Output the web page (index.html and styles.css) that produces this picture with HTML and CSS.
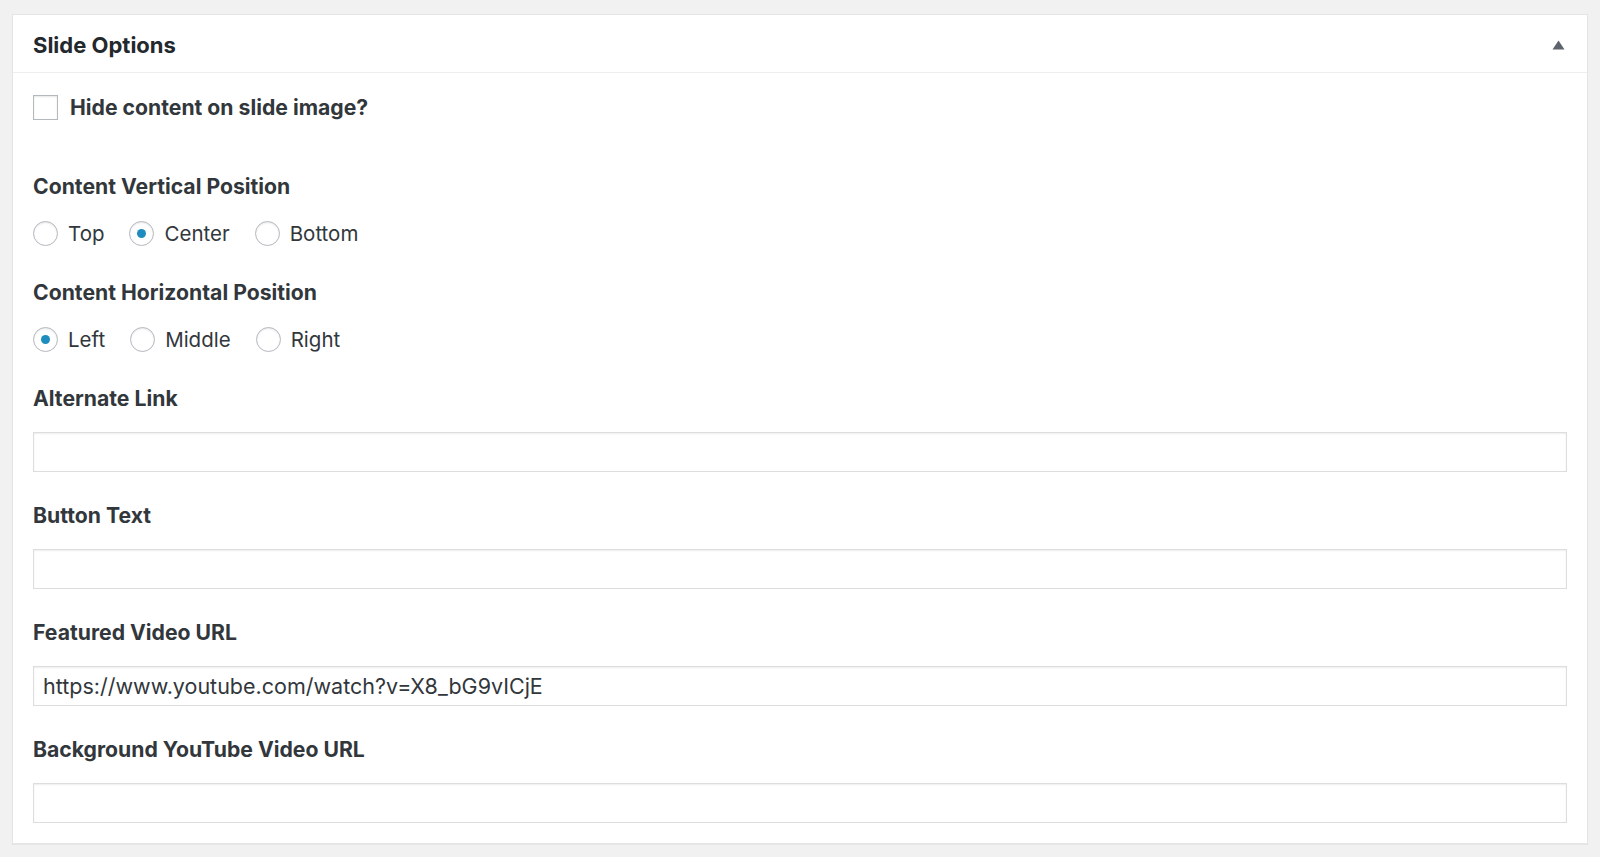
FILE: index.html
```html
<!DOCTYPE html>
<html lang="en">
<head>
    <meta charset="UTF-8">
    <meta name="viewport" content="width=device-width, initial-scale=1.0">
    <title>Slide Options</title>
    <link rel="stylesheet" href="styles.css">
</head>
<body>
    <div class="postbox">
        <div class="postbox-header">
            <h2>Slide Options</h2>
            <button class="toggle" type="button" aria-label="Toggle panel">
                <svg width="13" height="10" viewBox="0 0 13 10"><path d="M6.5 0.5 L12.5 9.5 L0.5 9.5 Z" fill="#5d646b"/></svg>
            </button>
        </div>
        <div class="inside">
            <label class="check-row">
                <input type="checkbox" class="check">
                <span>Hide content on slide image?</span>
            </label>

            <!-- Vertical position -->
            <div class="field-label first">Content Vertical Position</div>
            <div class="radio-row">
                <label class="option"><input type="radio" name="vpos" value="top"><span>Top</span></label>
                <label class="option"><input type="radio" name="vpos" value="center" checked><span>Center</span></label>
                <label class="option"><input type="radio" name="vpos" value="bottom"><span>Bottom</span></label>
            </div>

            <!-- Horizontal position -->
            <div class="field-label">Content Horizontal Position</div>
            <div class="radio-row">
                <label class="option"><input type="radio" name="hpos" value="left" checked><span>Left</span></label>
                <label class="option"><input type="radio" name="hpos" value="middle"><span>Middle</span></label>
                <label class="option"><input type="radio" name="hpos" value="right"><span>Right</span></label>
            </div>

            <div class="field">
                <label class="field-label" for="altLink">Alternate Link</label>
                <input type="text" id="altLink" class="text-input">
            </div>
            <div class="field">
                <label class="field-label" for="buttonText">Button Text</label>
                <input type="text" id="buttonText" class="text-input">
            </div>
            <div class="field">
                <label class="field-label" for="videoUrl">Featured Video URL</label>
                <input type="text" id="videoUrl" class="text-input" value="https://www.youtube.com/watch?v=X8_bG9vICjE">
            </div>
            <div class="field last">
                <label class="field-label" for="bgVideoUrl">Background YouTube Video URL</label>
                <input type="text" id="bgVideoUrl" class="text-input">
            </div>
        </div>
    </div>
</body>
</html>
```

FILE: styles.css
```css
body {
    font-family: Inter, 'Liberation Sans', sans-serif;
    margin: 0;
    padding: 14px 12px 13px 12px;
    background-color: #f1f1f1;
    color: #32373c;
}

.postbox {
    background-color: #fff;
    border: 1px solid #e5e5e5;
    box-shadow: 0 1px 1px rgba(0, 0, 0, 0.04);
}

.postbox-header {
    display: flex;
    justify-content: space-between;
    align-items: center;
    height: 54px;
    padding: 3px 22px 0 20px;
    border-bottom: 1px solid #eee;
}

.postbox-header h2 {
    margin: 0;
    font-size: 22px;
    font-weight: 700;
    color: #23282d;
}

.toggle {
    border: none;
    background: none;
    padding: 0;
    display: flex;
    cursor: pointer;
}

.inside {
    padding: 22px 20px 20px 20px;
}

.check-row {
    display: flex;
    align-items: center;
    gap: 12px;
    font-size: 21.2px;
    line-height: 25px;
    font-weight: 700;
    color: #32373c;
}

.check {
    appearance: none;
    margin: 0;
    width: 25px;
    height: 25px;
    border: 1px solid #b4b9be;
    background: #fff;
    box-shadow: inset 0 1px 2px rgba(0, 0, 0, 0.1);
}

.field-label {
    display: block;
    font-size: 21.2px;
    line-height: 24px;
    font-weight: 700;
    color: #32373c;
    margin-bottom: 22px;
}

.field-label.first {
    margin-top: 54px;
    margin-bottom: 23px;
}

.radio-row {
    display: flex;
    align-items: center;
    height: 25px;
    margin-bottom: 34px;
}

.radio-row + .field-label {
    margin-bottom: 23px;
}

.option {
    display: flex;
    align-items: center;
    gap: 10px;
    margin-right: 25px;
    font-size: 20.5px;
    line-height: 25px;
    color: #32373c;
}

.option input {
    appearance: none;
    margin: 0;
    width: 25px;
    height: 25px;
    border: 1px solid #b4b9be;
    border-radius: 50%;
    background: #fff;
    box-shadow: inset 0 1px 2px rgba(0, 0, 0, 0.1);
    display: flex;
    align-items: center;
    justify-content: center;
}

.option input:checked::before {
    content: "";
    width: 9px;
    height: 9px;
    border-radius: 50%;
    background-color: #1e8cbe;
}

.field {
    margin-bottom: 31px;
}

.field.last {
    margin-bottom: 0;
}

.text-input {
    display: block;
    width: 100%;
    height: 40px;
    box-sizing: border-box;
    margin: 0;
    padding: 0 9px;
    border: 1px solid #ddd;
    box-shadow: inset 0 1px 2px rgba(0, 0, 0, 0.07);
    font-family: Inter, 'Liberation Sans', sans-serif;
    font-size: 21.5px;
    color: #32373c;
    background: #fff;
    outline: none;
}
```
